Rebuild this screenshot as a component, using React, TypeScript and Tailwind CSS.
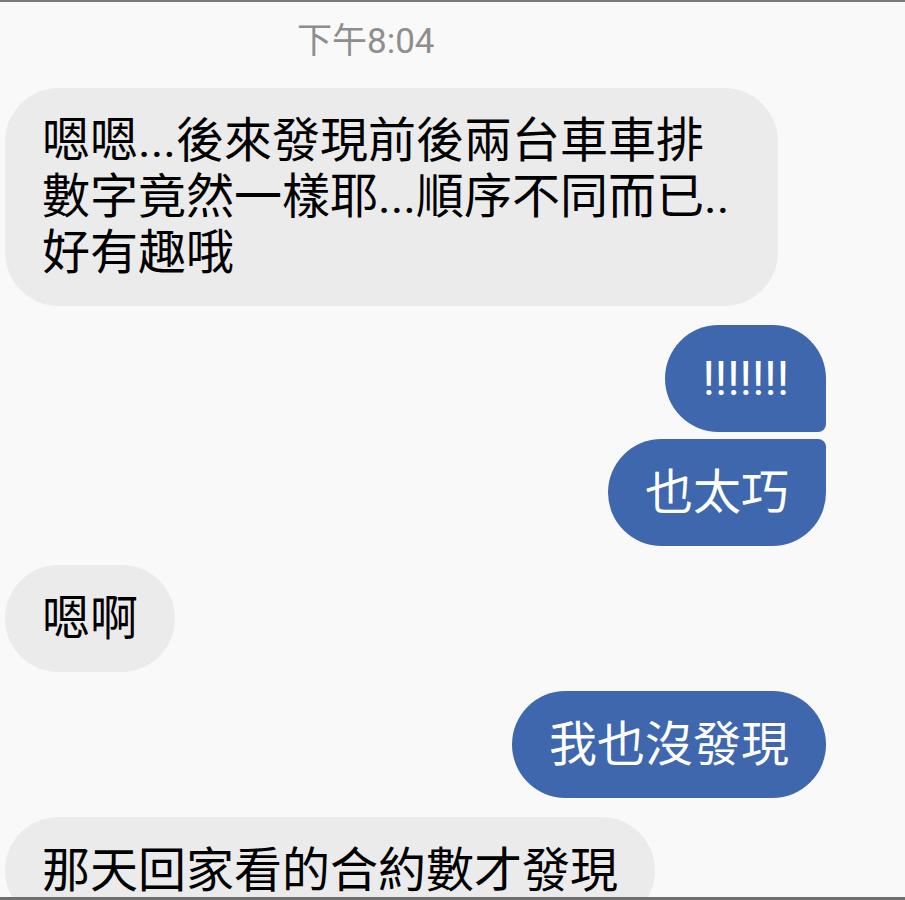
import React from "react";

type Msg = { side: "in" | "out"; lines: string[]; shape?: string; width?: string; leading?: string };

const messages: Msg[] = [
  {
    side: "in",
    lines: ["嗯嗯...後來發現前後兩台車車排", "數字竟然一樣耶...順序不同而已..", "好有趣哦"],
    width: "w-[773px]",
    leading: "leading-[56px]",
  },
  { side: "out", lines: ["!!!!!!!"], shape: "rounded-[54px] rounded-br-[8px]" },
  { side: "out", lines: ["也太巧"], shape: "rounded-[54px] rounded-tr-[8px] mt-[7px]" },
  { side: "in", lines: ["嗯啊"] },
  { side: "out", lines: ["我也沒發現"] },
  { side: "in", lines: ["那天回家看的合約數才發現"] },
];

const Bubble = ({ msg, first }: { msg: Msg; first: boolean }) => {
  const isOut = msg.side === "out";
  const color = isOut ? "bg-[#3f67ae] text-white" : "bg-[#ebebeb] text-black";
  const shape = msg.shape ?? "rounded-[54px]";
  const gap = msg.shape?.includes("mt-") ? "" : first ? "" : "mt-[19px]";
  return (
    <div className={`flex shrink-0 ${isOut ? "justify-end pr-[79px]" : "justify-start pl-[5px]"} ${gap}`}>
      <div className={`${color} ${shape} ${msg.width ?? ""} px-[37px] py-[25px] shrink-0`}>
        {msg.lines.map((l, i) => (
          <div key={i} className={`whitespace-nowrap text-[48px] ${msg.leading ?? "leading-[57px]"}`}>
            {l}
          </div>
        ))}
      </div>
    </div>
  );
};

export default function App() {
  return (
    <div
      className="w-[905px] h-[900px] overflow-hidden bg-[#f9f9f9] border-t-2 border-[#7a7a7a] flex flex-col relative"
      style={{ fontFamily: "Roboto, 'Noto Sans CJK TC', sans-serif" }}
    >
      <div className="shrink-0 pl-[297px] pt-[20px] h-[86px] text-[35px] leading-[40px] text-[#8e8e8e]">
        下午8:04
      </div>
      {messages.map((m, i) => (
        <Bubble key={i} msg={m} first={i === 0} />
      ))}
      <div className="absolute left-0 right-0 bottom-0 h-[3px] bg-[#6f6f6f]" />
    </div>
  );
}
